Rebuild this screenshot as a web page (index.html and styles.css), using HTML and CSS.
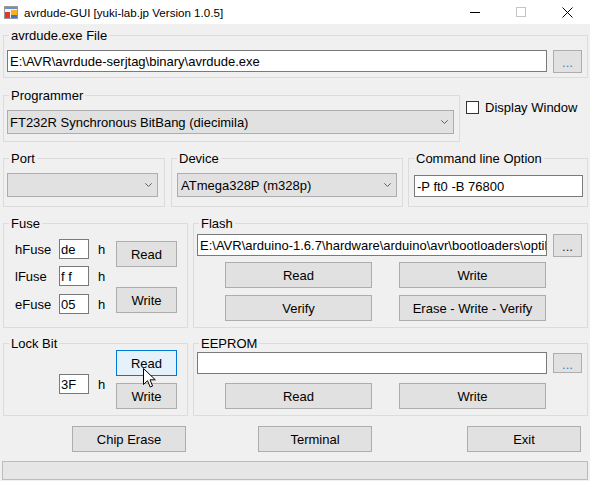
FILE: index.html
```html
<!DOCTYPE html>
<html lang="ja">
<head>
<meta charset="utf-8">
<title>avrdude-GUI</title>
<link rel="stylesheet" href="styles.css">
</head>
<body>
<header class="titlebar">
  <svg class="appicon" width="14" height="13" viewBox="0 0 14 13">
    <rect x="0.5" y="0.5" width="13" height="12" fill="#f2f2f2" stroke="#9a9a9a"/>
    <rect x="1" y="1" width="12" height="2" fill="#6b8fc9"/>
    <rect x="1" y="6" width="5" height="6" fill="#e0392b"/>
    <rect x="7" y="4" width="6" height="5" fill="#f5b324"/>
    <rect x="7" y="9" width="6" height="3" fill="#3b74d4"/>
  </svg>
  <span class="title">avrdude-GUI [yuki-lab.jp Version 1.0.5]</span>
  <div class="caption">
    <span class="capbtn"><svg width="10" height="10" viewBox="0 0 10 10"><path d="M0 5.5H10" stroke="#000"/></svg></span>
    <span class="capbtn"><svg width="10" height="10" viewBox="0 0 10 10"><rect x="0.5" y="0.5" width="9" height="9" fill="none" stroke="#c4c4c4"/></svg></span>
    <span class="capbtn"><svg width="11" height="11" viewBox="0 0 11 11"><path d="M0.5 0.5L10.5 10.5M10.5 0.5L0.5 10.5" stroke="#000"/></svg></span>
  </div>
</header>

<main class="client">
  <fieldset class="grp g-exe">
    <legend>avrdude.exe File</legend>
    <div class="path-row pad-exe">
      <input class="tb tb-wide" value="E:\AVR\avrdude-serjtag\binary\avrdude.exe" readonly>
      <button class="btn browse blue">...</button>
    </div>
  </fieldset>

  <div class="row row2">
    <fieldset class="grp g-prog">
      <legend>Programmer</legend>
      <div class="pad-prog">
        <div class="combo combo-prog"><span>FT232R Synchronous BitBang (diecimila)</span><svg class="chev" width="7" height="4" viewBox="0 0 7 4"><path d="M0.3 0.3L3.5 3.5L6.7 0.3" fill="none" stroke="#606060"/></svg></div>
      </div>
    </fieldset>
    <label class="check"><span class="box"></span>Display Window</label>
  </div>

  <div class="row row3">
    <fieldset class="grp g-port">
      <legend>Port</legend>
      <div class="pad-port">
        <div class="combo combo-port"><span></span><svg class="chev" width="7" height="4" viewBox="0 0 7 4"><path d="M0.3 0.3L3.5 3.5L6.7 0.3" fill="none" stroke="#606060"/></svg></div>
      </div>
    </fieldset>
    <fieldset class="grp g-dev">
      <legend>Device</legend>
      <div class="pad-dev">
        <div class="combo combo-dev"><span>ATmega328P (m328p)</span><svg class="chev" width="7" height="4" viewBox="0 0 7 4"><path d="M0.3 0.3L3.5 3.5L6.7 0.3" fill="none" stroke="#606060"/></svg></div>
      </div>
    </fieldset>
    <fieldset class="grp g-cmd">
      <legend>Command line Option</legend>
      <div class="pad-cmd">
        <input class="tb tb-cmd" value="-P ft0 -B 76800" readonly>
      </div>
    </fieldset>
  </div>

  <div class="row row4">
    <fieldset class="grp g-fuse">
      <legend>Fuse</legend>
      <div class="fuse-body">
        <div class="regs">
          <div class="reg"><span class="reg-name">hFuse</span><input class="tb tb-byte" value="de" readonly><span class="reg-h">h</span></div>
          <div class="reg reg-l"><span class="reg-name">lFuse</span><input class="tb tb-byte" value="f f" readonly><span class="reg-h">h</span></div>
          <div class="reg reg-e"><span class="reg-name">eFuse</span><input class="tb tb-byte" value="05" readonly><span class="reg-h">h</span></div>
        </div>
        <div class="btncol fuse-btns">
          <button class="btn btn-s">Read</button>
          <button class="btn btn-s">Write</button>
        </div>
      </div>
    </fieldset>
    <fieldset class="grp g-flash">
      <legend>Flash</legend>
      <div class="flash-body">
        <div class="path-row">
          <input class="tb tb-file" value="E:\AVR\arduino-1.6.7\hardware\arduino\avr\bootloaders\optiboot\optiboot_atmega328.hex" readonly>
          <button class="btn browse">...</button>
        </div>
        <div class="btngrid flash-grid">
          <button class="btn btn-m">Read</button>
          <button class="btn btn-m">Write</button>
          <button class="btn btn-m">Verify</button>
          <button class="btn btn-m">Erase - Write - Verify</button>
        </div>
      </div>
    </fieldset>
  </div>

  <div class="row row5">
    <fieldset class="grp g-fuse">
      <legend>Lock Bit</legend>
      <div class="lock-body">
        <div class="regs lock-regs">
          <div class="reg"><span class="reg-name"></span><input class="tb tb-byte" value="3F" readonly><span class="reg-h">h</span></div>
        </div>
        <div class="btncol lock-btns">
          <button class="btn btn-s focused">Read</button>
          <button class="btn btn-s">Write</button>
        </div>
      </div>
    </fieldset>
    <fieldset class="grp g-flash">
      <legend>EEPROM</legend>
      <div class="eeprom-body">
        <div class="path-row">
          <input class="tb tb-file" value="" readonly>
          <button class="btn browse short blue">...</button>
        </div>
        <div class="btngrid eeprom-grid">
          <button class="btn btn-m">Read</button>
          <button class="btn btn-m">Write</button>
        </div>
      </div>
    </fieldset>
  </div>

  <div class="row row6">
    <button class="btn btn-l b-chip">Chip Erase</button>
    <button class="btn btn-l b-term">Terminal</button>
    <button class="btn btn-l b-exit">Exit</button>
  </div>

  <div class="status"></div>
</main>

<svg class="cursor" width="13" height="21" viewBox="0 0 13 21">
  <path d="M0.5 0.5V16.5L4.5 12.7L7.2 19L9.6 18L7 11.8H12.3Z" fill="#fff" stroke="#000" stroke-linejoin="miter"/>
</svg>
</body>
</html>
```

FILE: styles.css
```css
* { box-sizing: border-box; }

html, body {
  margin: 0;
  padding: 0;
}

body {
  position: relative;
  width: 590px;
  height: 481px;
  overflow: hidden;
  background: #f0f0f0;
  font-family: "Liberation Sans", Arial, sans-serif;
  font-size: 13px;
  color: #000;
}

/* ---------- title bar ---------- */
.titlebar {
  height: 24px;
  background: #fff;
  display: flex;
  align-items: center;
}

.appicon {
  margin-left: 4px;
  margin-top: 1px;
  flex: none;
}

.title {
  margin-left: 6px;
  font-size: 11.6px;
  color: #000;
}

.caption {
  margin-left: auto;
  display: flex;
  height: 24px;
}

.capbtn {
  width: 46px;
  height: 24px;
  display: flex;
  align-items: center;
  justify-content: center;
}

/* ---------- group boxes ---------- */
.grp {
  margin: 0;
  padding: 0;
  border: 1px solid #dcdcdc;
  min-width: 0;
}

.grp legend {
  margin-left: 5px;
  padding: 0 2px;
  font-size: 13px;
  line-height: 13px;
}

.row {
  display: flex;
  margin-left: 3px;
}

/* ---------- controls ---------- */
.tb {
  margin: 0;
  border: 1px solid #7a7a7a;
  background: #fff;
  font: inherit;
  color: #000;
  padding: 0 0 0 2px;
  height: 22px;
  outline: none;
}

.btn {
  margin: 0;
  padding: 0;
  border: 1px solid #adadad;
  background: #e1e1e1;
  font: inherit;
  color: #000;
  text-align: center;
}

.btn.focused {
  background: #e5f1fb;
  border-color: #0078d7;
}

.browse {
  width: 29px;
  height: 23px;
  flex: none;
  color: #333;
  padding-top: 2px;
}

.browse.blue { color: #3f7fc0; }
.browse.short { height: 20px; margin-top: 1px; }

.combo {
  height: 24px;
  background: #e1e1e1;
  border: 1px solid #adadad;
  display: flex;
  align-items: center;
  padding: 0 5px 0 2px;
}

.combo .chev {
  margin-left: auto;
  flex: none;
}

.path-row {
  display: flex;
  align-items: flex-start;
  gap: 6px;
}

/* ---------- row 1 ---------- */
.g-exe {
  margin: 5px 0 0 3px;
  width: 585px;
}

.pad-exe { padding: 8px 0 4px 3px; }
.tb-wide { width: 540px; }

/* ---------- row 2 ---------- */
.row2 { margin-top: 11px; }
.g-prog { width: 457px; }
.pad-prog { padding: 8px 0 7px 3px; }
.combo-prog { width: 447px; }

.check {
  align-self: flex-start;
  margin: 12px 0 0 6px;
  display: flex;
  align-items: center;
  gap: 6px;
  height: 13px;
}

.check .box {
  width: 13px;
  height: 13px;
  border: 1px solid #333;
  background: #fff;
}

/* ---------- row 3 ---------- */
.row3 { margin-top: 10px; }
.g-port { width: 162px; }
.pad-port { padding: 8px 0 9px 3px; }
.combo-port { width: 151px; }

.g-dev { width: 232px; margin-left: 6px; }
.pad-dev { padding: 8px 0 0 5px; }
.combo-dev { width: 220px; padding-left: 3px; }

.g-cmd { width: 180px; margin-left: 5px; }
.pad-cmd { padding: 10px 0 0 5px; }
.tb-cmd { width: 169px; }

/* ---------- row 4 ---------- */
.row4 { margin-top: 10px; }
.g-fuse { width: 185px; }
.g-flash { width: 395px; margin-left: 5px; }

.fuse-body {
  display: flex;
  height: 97px;
}

.regs {
  width: 112px;
  padding: 9px 0 0 11px;
}

.reg {
  display: flex;
  align-items: center;
  height: 20px;
}

.reg-l { margin-top: 7px; }
.reg-e { margin-top: 8px; }

.reg-name { width: 44px; }

.tb-byte {
  width: 30px;
  height: 20px;
  padding-left: 1px;
}

.reg-h { margin-left: 9px; }

.btncol {
  display: flex;
  flex-direction: column;
}

.btn-s { width: 61px; height: 26px; }

.fuse-btns { padding-top: 11px; gap: 20px; }

.flash-body {
  height: 97px;
  padding: 4px 0 0 3px;
}

.tb-file { width: 350px; }

.btngrid {
  display: grid;
  grid-template-columns: 147px 147px;
  column-gap: 27px;
  row-gap: 7px;
  margin-left: 28px;
}

.btn-m { height: 26px; }

.flash-grid { margin-top: 5px; }

/* ---------- row 5 ---------- */
.row5 { margin-top: 9px; }

.lock-body {
  display: flex;
  height: 65px;
}

.lock-regs { padding-top: 24px; }
.lock-btns { gap: 7px; }

.eeprom-body {
  height: 65px;
  padding: 2px 0 0 3px;
}

.eeprom-grid { margin-top: 9px; }

/* ---------- row 6 ---------- */
.row6 { margin-top: 10px; }
.btn-l { width: 114px; height: 26px; }
.b-chip { margin-left: 69px; }
.b-term { margin-left: 72px; }
.b-exit { margin-left: 95px; }

/* ---------- status / progress ---------- */
.status {
  margin: 9px 0 0 2px;
  width: 586px;
  height: 19px;
  background: #e6e6e6;
  border: 1px solid #bcbcbc;
}

/* mouse pointer over the focused button */
.cursor {
  position: absolute;
  left: 143px;
  top: 368px;
}
```
